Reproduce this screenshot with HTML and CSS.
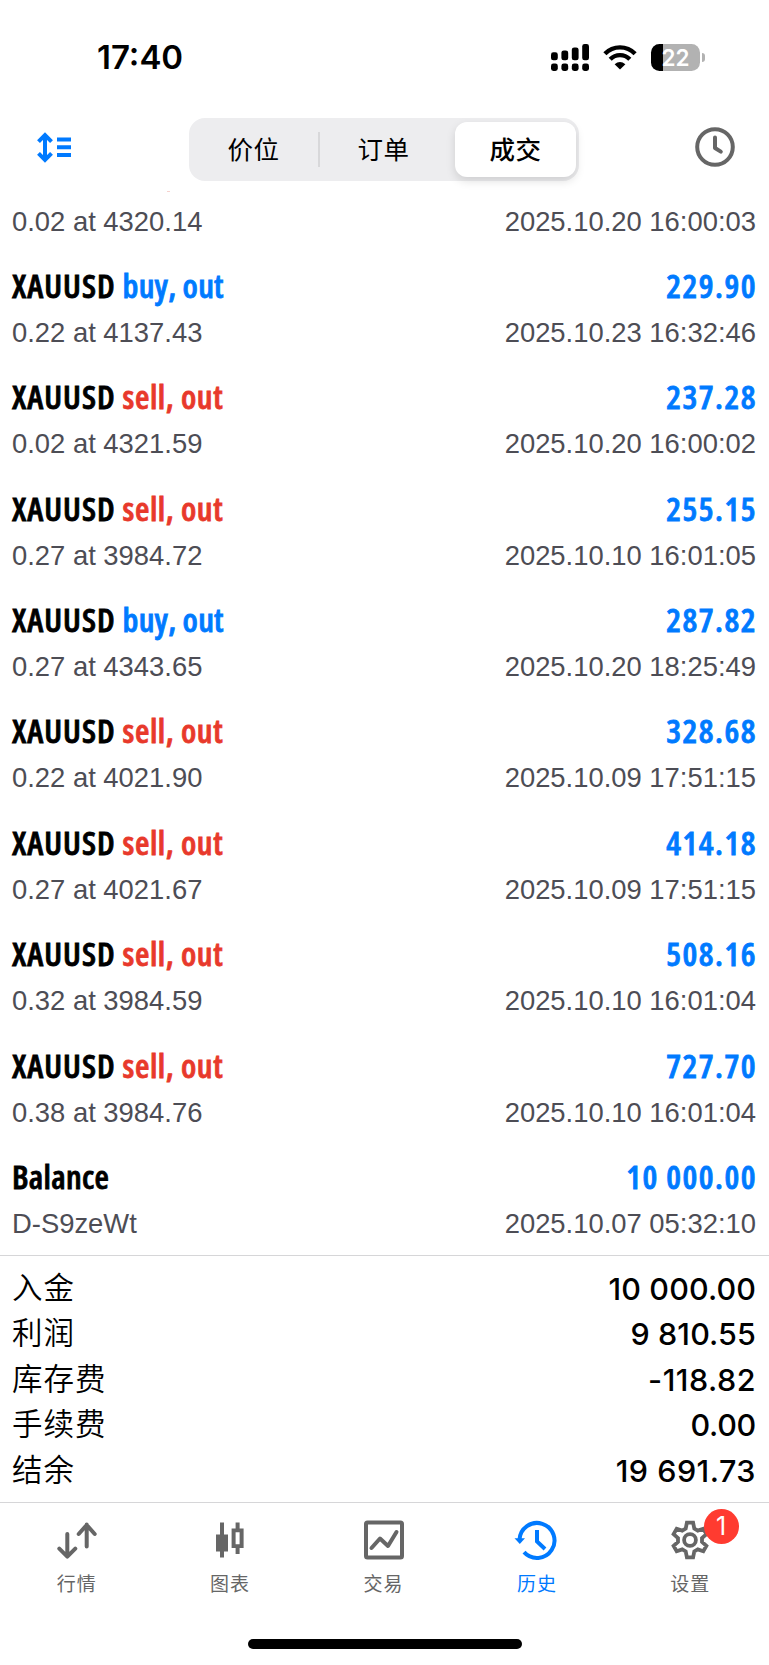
FILE: index.html
```html
<!DOCTYPE html>
<html lang="zh-CN">
<head>
<meta charset="utf-8">
<title>历史</title>
<link rel="stylesheet" href="styles.css">
</head>
<body>
<header class="status">
  <time class="clock">17:40</time>
  <div class="indicators">
    <svg class="signal" width="38" height="27" viewBox="0 0 38 27"><g><rect x="0" y="8.3" width="6.8" height="8" rx="2.4"/><rect x="10.4" y="6.4" width="6.8" height="9.9" rx="2.4"/><rect x="20.8" y="3.4" width="6.8" height="12.9" rx="2.4"/><rect x="31.2" y="0" width="6.8" height="16.3" rx="2.4"/><rect x="0" y="19.5" width="6.8" height="7.5" rx="2.4"/><rect x="10.4" y="19.5" width="6.8" height="7.5" rx="2.4"/><rect x="20.8" y="19.5" width="6.8" height="7.5" rx="2.4"/><rect x="31.2" y="19.5" width="6.8" height="7.5" rx="2.4"/></g></svg>
    <svg class="wifi" width="34" height="25" viewBox="0 0 34 25"><path d="M1.9 8.7C10.3.2 23.7.2 32.1 8.7M7.2 14.2C12.7 8.8 21.3 8.8 26.8 14.2" fill="none" stroke="#000" stroke-width="4.4"/><path d="M17 24.6 11.6 19.2Q17 14.6 22.4 19.2Z"/></svg>
    <div class="battery"><span class="cell">22</span><i class="cap"></i></div>
  </div>
</header>
<nav class="toolbar">
  <svg class="sort" width="34" height="31" viewBox="0 0 34 31"><path d="M8 3.5V27.5M1.5 9.6 8 3.1 14.5 9.6M1.5 21.4 8 27.9 14.5 21.4" fill="none" stroke="#007aff" stroke-width="4"/><path d="M20 5.5H34V9.5H20ZM20 13.3H34V17.3H20ZM20 21H34V25H20Z" fill="#007aff"/></svg>
  <div class="segments"><span class="seg">价位</span><span class="seg second">订单</span><span class="seg active">成交</span></div>
  <svg class="period" width="40" height="40" viewBox="0 0 40 40" fill="none" stroke="#666"><circle cx="20" cy="20" r="17.8" stroke-width="4"/><path d="M20 10.5V21L25.8 24.6" stroke-width="4" stroke-linecap="round" stroke-linejoin="round"/></svg>
</nav>
<main class="deals">
  <i class="trace"></i>
  <article class="deal partial"><div class="sub"><span>0.02 at 4320.14</span><span>2025.10.20 16:00:03</span></div></article>
  <article class="deal"><div class="head"><b>XAUUSD</b><em class="buy">buy, out</em><strong>229.90</strong></div><div class="sub"><span>0.22 at 4137.43</span><span>2025.10.23 16:32:46</span></div></article>
  <article class="deal"><div class="head"><b>XAUUSD</b><em class="sell">sell, out</em><strong>237.28</strong></div><div class="sub"><span>0.02 at 4321.59</span><span>2025.10.20 16:00:02</span></div></article>
  <article class="deal"><div class="head"><b>XAUUSD</b><em class="sell">sell, out</em><strong>255.15</strong></div><div class="sub"><span>0.27 at 3984.72</span><span>2025.10.10 16:01:05</span></div></article>
  <article class="deal"><div class="head"><b>XAUUSD</b><em class="buy">buy, out</em><strong>287.82</strong></div><div class="sub"><span>0.27 at 4343.65</span><span>2025.10.20 18:25:49</span></div></article>
  <article class="deal"><div class="head"><b>XAUUSD</b><em class="sell">sell, out</em><strong>328.68</strong></div><div class="sub"><span>0.22 at 4021.90</span><span>2025.10.09 17:51:15</span></div></article>
  <article class="deal"><div class="head"><b>XAUUSD</b><em class="sell">sell, out</em><strong>414.18</strong></div><div class="sub"><span>0.27 at 4021.67</span><span>2025.10.09 17:51:15</span></div></article>
  <article class="deal"><div class="head"><b>XAUUSD</b><em class="sell">sell, out</em><strong>508.16</strong></div><div class="sub"><span>0.32 at 3984.59</span><span>2025.10.10 16:01:04</span></div></article>
  <article class="deal"><div class="head"><b>XAUUSD</b><em class="sell">sell, out</em><strong>727.70</strong></div><div class="sub"><span>0.38 at 3984.76</span><span>2025.10.10 16:01:04</span></div></article>
  <article class="deal"><div class="head"><b class="word">Balance</b><strong>10 000.00</strong></div><div class="sub"><span>D-S9zeWt</span><span>2025.10.07 05:32:10</span></div></article>
</main>
<section class="summary">
  <div class="total"><span>入金</span><data>10 000.00</data></div>
  <div class="total"><span>利润</span><data>9 810.55</data></div>
  <div class="total"><span>库存费</span><data class="loose">-118.82</data></div>
  <div class="total"><span>手续费</span><data class="tight">0.00</data></div>
  <div class="total"><span>结余</span><data class="loose">19 691.73</data></div>
</section>
<footer class="tabs">
  <div class="tab"><svg width="44" height="44" viewBox="0 0 44 44" fill="none" stroke="#666" stroke-width="4" stroke-linecap="round" stroke-linejoin="round"><path d="M12.300 17V39M4.300 31.600 12.300 39.600 20.300 31.600M31.700 29.500V7.500M23.700 17 31.700 8 39.700 17"/></svg><span>行情</span></div>
  <div class="tab"><svg width="44" height="44" viewBox="0 0 44 44" fill="#666"><path d="M12 5.500h4v12h4v17h-4v6h-4v-6H8v-17h4ZM27.600 5.500h4v6h4v19.500h-4v6h-4v-6h-4v-19.500h4ZM27.600 15.300v12h4v-12Z" fill-rule="evenodd"/></svg><span>图表</span></div>
  <div class="tab"><svg width="44" height="44" viewBox="0 0 44 44" fill="none" stroke="#666" stroke-width="4" stroke-linecap="round" stroke-linejoin="round"><rect x="4" y="5.500" width="36" height="35" rx="1.500"/><path d="M9.500 31 18 21.500 26 29 34.500 15"/></svg><span>交易</span></div>
  <div class="tab current"><svg width="44" height="44" viewBox="0 0 44 44" fill="none" stroke="#007aff" stroke-width="4"><path d="M4.500 22.700A17.500 17.500 0 1 1 9 35.200"/><path d="M-.5 21.300H10L4.800 27Z" fill="#007aff" stroke="none"/><path d="M22 13V24.500L30 32"/></svg><span>历史</span></div>
  <div class="tab"><svg width="44" height="44" viewBox="0 0 44 44" fill="none" stroke="#666" stroke-width="3.800"><path d="M18.900 5.700H25.100L26.300 11.600 29.800 13.600 35.300 11.700 38.400 17.100 34 21V25L38.400 28.900 35.300 34.300 29.800 32.400 26.300 34.400 25.100 40.300H18.900L17.700 34.400 14.200 32.400 8.700 34.300 5.600 28.900 10 25V21L5.600 17.100 8.700 11.700 14.200 13.600 17.700 11.600Z"/><circle cx="22" cy="23" r="5.900"/></svg><span>设置</span><mark class="badge">1</mark></div>
</footer>
<div class="home"><i class="home-bar"></i></div>
</body>
</html>
```
FILE: styles.css
```css
* { box-sizing: border-box; }
body {
  margin: 0;
  width: 769px;
  height: 1665px;
  overflow: hidden;
  background: #fff;
  color: #000;
  font-family: "Liberation Sans", "Noto Sans CJK SC", sans-serif;
  display: flex;
  flex-direction: column;
}
svg { display: block; flex: none; overflow: visible; }
.status {
  height: 98px;
  padding: 17px 64px 0 97px;
  display: flex;
  align-items: center;
  justify-content: space-between;
}
.clock { font: 600 33px/40px Inter, sans-serif; }
.indicators { display: flex; align-items: center; gap: 14px; }
.battery { display: flex; align-items: center; gap: 2px; }
.cell {
  width: 49px;
  height: 27px;
  border-radius: 8.5px;
  background: linear-gradient(90deg, #000 11.5px, #b2b2b2 11.5px);
  color: #fff;
  font: 600 22.5px/27px Inter, sans-serif;
  text-align: center;
}
.cap { width: 3px; height: 9px; border-radius: 0 4px 4px 0; background: #b2b2b2; }
.toolbar {
  height: 92px;
  padding: 20px 34px 0 37px;
  display: flex;
  align-items: flex-start;
  justify-content: space-between;
}
.sort { margin-top: 14px; }
.period { margin-top: 9px; }
.segments {
  width: 390px;
  height: 63px;
  margin-left: 118px;
  margin-right: auto;
  padding: 4px 3px 4px 0;
  display: flex;
  border-radius: 16px;
  background: #ededef;
}
.seg {
  flex: 0 0 129px;
  display: flex;
  align-items: center;
  justify-content: center;
  padding-bottom: 2px;
  font: 400 25.5px/36px "Noto Sans CJK SC", sans-serif;
  letter-spacing: .5px;
}
.seg.second {
  flex-basis: 137px;
  padding-right: 6px;
  background: linear-gradient(#d8d8da, #d8d8da) 0 50% / 2px 35px no-repeat;
}
.seg.active {
  flex-basis: 121px;
  font-weight: 500;
  border-radius: 12px;
  background: #fff;
  box-shadow: 0 4px 10px rgba(0, 0, 0, .13);
}
.deals { height: 1066px; position: relative; }
.trace { position: absolute; left: 167px; top: 1px; width: 3px; height: 1px; background: #f6d2ce; }
.deal {
  height: 111.4px;
  padding: 12px 13px 0 12px;
}
.deal.partial { height: 61px; padding-top: 15px; }
.head {
  height: 46px;
  display: flex;
  align-items: center;
  font: 600 33px/46px "Open Sans", sans-serif;
  font-stretch: 75%;
  -webkit-text-stroke: .8px currentColor;
}
.head b { font-weight: 600; letter-spacing: 1px; }
.head b.word { letter-spacing: .3px; }
.head em { font-style: normal; margin-left: 7px; }
.head strong { font-weight: 600; margin-left: auto; color: #007aff; letter-spacing: 1.5px; margin-right: -1px; }
.head .buy { color: #007aff; letter-spacing: .25px; }
.head .sell { color: #e8392b; letter-spacing: .6px; }
.sub {
  height: 34px;
  margin-top: 7px;
  display: flex;
  justify-content: space-between;
  font-size: 27.4px;
  line-height: 34px;
  color: #4d4d55;
}
.deal.partial .sub { margin-top: 0; }
.summary {
  height: 247px;
  padding: 9px 13px 0 12px;
  border-top: 1px solid #d6d6d8;
}
.total {
  height: 45.6px;
  display: flex;
  align-items: center;
  justify-content: space-between;
}
.total span {
  padding-bottom: 4px;
  font: 350 30.5px/41px "Noto Sans CJK SC", sans-serif;
  letter-spacing: 1px;
}
.total data {
  font: 500 30.5px/45px Inter, sans-serif;
  font-feature-settings: "calt" 0;
  letter-spacing: .1px;
}
.total .loose { letter-spacing: .5px; }
.total .tight { letter-spacing: -.3px; }
.tabs {
  height: 117px;
  padding-right: 2px;
  border-top: 1px solid #d6d6d8;
  display: flex;
}
.tab {
  flex: 1;
  position: relative;
  padding-top: 14px;
  display: flex;
  flex-direction: column;
  align-items: center;
  color: #666;
  font: 400 19px/28px "Noto Sans CJK SC", sans-serif;
  letter-spacing: 1px;
}
.tab span { margin-top: 8px; }
.tab.current { color: #007aff; }
.badge {
  position: absolute;
  left: 90px;
  top: 6px;
  width: 35px;
  height: 35px;
  border-radius: 50%;
  background: #ff3b30;
  color: #fff;
  font: 400 25px/35px Inter, sans-serif;
  letter-spacing: 0;
  text-align: center;
}
.home { height: 46px; padding-top: 20px; display: flex; justify-content: center; }
.home-bar { width: 274px; height: 10px; border-radius: 5px; background: #000; }
```
